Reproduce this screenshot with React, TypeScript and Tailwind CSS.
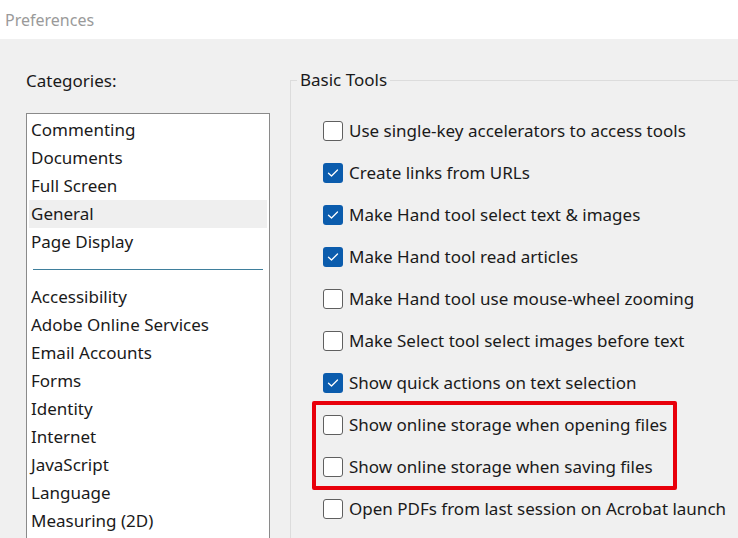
import React from "react";

const categoriesTop = ["Commenting", "Documents", "Full Screen", "General", "Page Display"];
const categoriesBottom = [
  "Accessibility",
  "Adobe Online Services",
  "Email Accounts",
  "Forms",
  "Identity",
  "Internet",
  "JavaScript",
  "Language",
  "Measuring (2D)",
];

const options: { label: string; checked: boolean }[] = [
  { label: "Use single-key accelerators to access tools", checked: false },
  { label: "Create links from URLs", checked: true },
  { label: "Make Hand tool select text & images", checked: true },
  { label: "Make Hand tool read articles", checked: true },
  { label: "Make Hand tool use mouse-wheel zooming", checked: false },
  { label: "Make Select tool select images before text", checked: false },
  { label: "Show quick actions on text selection", checked: true },
  { label: "Show online storage when opening files", checked: false },
  { label: "Show online storage when saving files", checked: false },
  { label: "Open PDFs from last session on Acrobat launch", checked: false },
];

function Box({ checked }: { checked: boolean }) {
  if (checked) {
    return (
      <span className="flex h-[20px] w-[20px] shrink-0 items-center justify-center rounded-[3px] bg-[#0b5cad]">
        <svg width="12" height="10" viewBox="0 0 12 10" fill="none">
          <path d="M1.5 5.2 L4.5 8 L10.5 2" stroke="white" strokeWidth="1.3" strokeLinecap="round" strokeLinejoin="round" />
        </svg>
      </span>
    );
  }
  return <span className="h-[20px] w-[20px] shrink-0 rounded-[3px] border border-[#5f5f5f] bg-white" />;
}

export default function App() {
  return (
    <div
      className="h-[538px] w-[738px] overflow-hidden bg-[#f0f0f0] text-[#1a1a1a]"
      style={{ fontFamily: '"Noto Sans", "Open Sans", sans-serif' }}
    >
      <div className="flex h-[39px] items-center bg-white pl-[5px] text-[16px] text-[#9a9a9a]">Preferences</div>
      <div className="flex">
        <div className="w-[290px] shrink-0 pl-[26px]">
          <div className="flex h-[74px] items-center pt-[10px] text-[17px]">Categories:</div>
          <div className="h-[600px] w-[244px] border border-[#8a8a8a] bg-white px-[2px] pt-[2px]">
            {categoriesTop.map((c) => (
              <div
                key={c}
                className={`flex h-[28px] items-center pl-[2px] text-[17px] ${c === "General" ? "bg-[#efefef]" : ""}`}
              >
                {c}
              </div>
            ))}
            <div className="mx-[4px] my-[13px] h-px bg-[#3f7f9c]" />
            {categoriesBottom.map((c) => (
              <div key={c} className="flex h-[28px] items-center pl-[2px] text-[17px]">
                {c}
              </div>
            ))}
          </div>
        </div>
        <div className="relative flex-1 pt-[41px]">
          <div className="relative h-[600px] border-l border-t border-[#dcdcdc]">
            <div className="absolute -top-[12px] left-[6px] bg-[#f0f0f0] px-[3px] text-[17px] leading-[22px]">
              Basic Tools
            </div>
            <div className="flex flex-col gap-[22px] pl-[32px] pt-[40px]">
              {options.map((o) => (
                <div key={o.label} className="flex h-[20px] items-center gap-[6px] text-[17px] whitespace-nowrap">
                  <Box checked={o.checked} />
                  <span>{o.label}</span>
                </div>
              ))}
            </div>
          </div>
          <div className="absolute left-[22px] top-[362px] h-[89px] w-[365px] rounded-[2px] border-[4px] border-[#e8000b]" />
        </div>
      </div>
    </div>
  );
}
